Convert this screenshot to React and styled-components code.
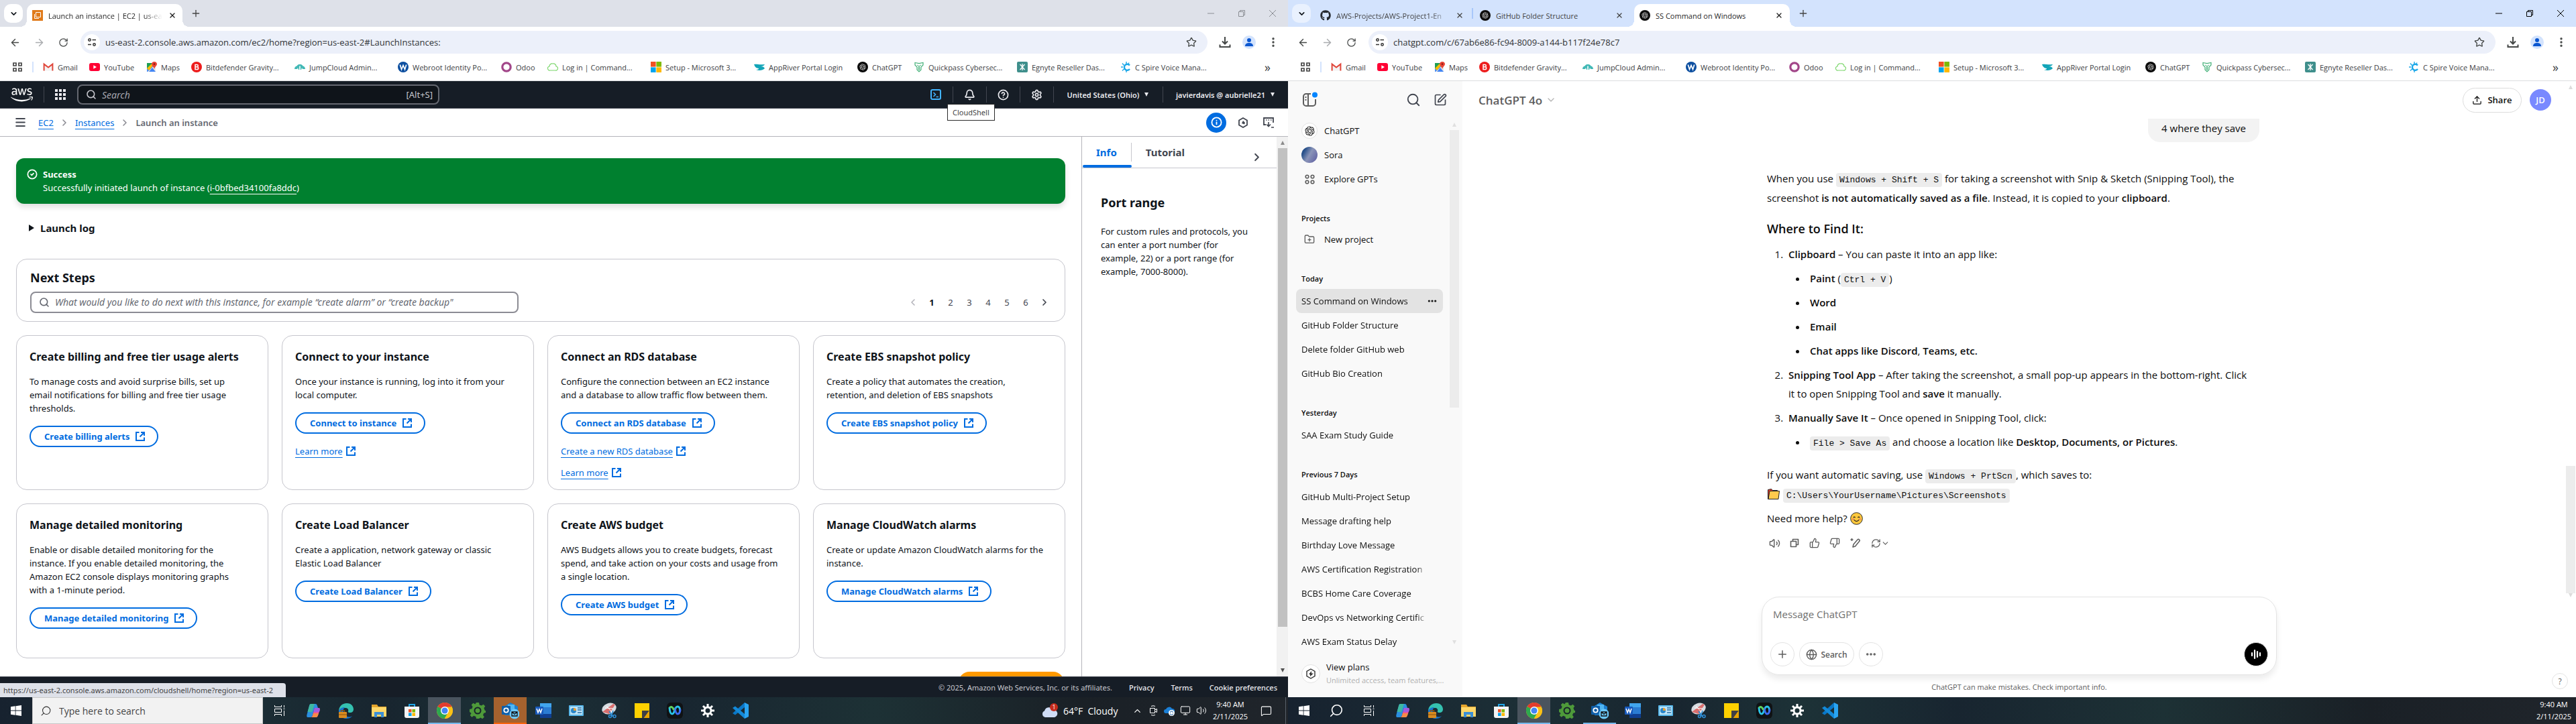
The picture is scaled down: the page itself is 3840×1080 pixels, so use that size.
import React from "react";
import styled, { createGlobalStyle, css } from "styled-components";
import {
  ArrowLeft, ArrowRight, RotateCw, Star, Search, X, Plus, ChevronDown, ChevronUp, ChevronLeft, ChevronRight,
  Bell, CircleHelp, Settings, CircleCheck, Info, Menu, ThumbsUp, ThumbsDown, Volume2, RefreshCw, Globe,
  SquarePen, Upload, FolderPlus, Monitor, MessageSquare, Ellipsis, EllipsisVertical,
} from "lucide-react";
import { FaAws, FaGithub } from "react-icons/fa";
import { RiOpenaiFill } from "react-icons/ri";

const ui = `"Open Sans", "Noto Sans", sans-serif`;
const ember = `"Noto Sans", "Open Sans", sans-serif`;
const ink = "#0f141a";
const blue = "#006ce0";
const line = "#c6c6cd";

const Global = createGlobalStyle`
  *, *::before, *::after { box-sizing: border-box; }
  body { margin: 0; background: #fff; font-family: ${ui}; color: ${ink}; }
  button, input, textarea { font: inherit; color: inherit; margin: 0; }
  svg { display: block; flex: none; }
`;

const bare = css`
  border: 0;
  padding: 0;
  background: none;
  display: flex;
  align-items: center;
  justify-content: center;
`;

const Desktop = styled.div`
  display: flex;
  height: 100vh;
`;
const Screen = styled.div`
  flex: 1;
  min-width: 0;
  display: flex;
  flex-direction: column;
`;

/* ---------- browser frame ---------- */

const TabStrip = styled.div`
  display: flex;
  align-items: flex-start;
  gap: 6px;
  height: 40px;
  padding: 6px 0 0 6px;
  background: ${(p) => (p.$active ? "#d3e3fd" : "#dee1e9")};
`;
const TabMenu = styled.button`
  ${bare};
  width: 28px;
  height: 28px;
  border-radius: 10px;
  background: ${(p) => (p.$active ? "#e9f1fe" : "#fff")};
`;
const Tab = styled.div`
  position: relative;
  display: flex;
  align-items: center;
  gap: 8px;
  width: 232px;
  height: 34px;
  padding: 0 8px;
  font-size: 11px;
  color: ${(p) => (p.$current ? "#1f1f1f" : "#444")};
  background: ${(p) => (p.$current ? "#fff" : "transparent")};
  border-radius: 10px 10px 0 0;
  ${(p) =>
    p.$current &&
    css`
      &::before,
      &::after {
        content: "";
        position: absolute;
        bottom: 0;
        width: 10px;
        height: 10px;
      }
      &::before {
        left: -10px;
        background: radial-gradient(circle at 0 0, transparent 10px, #fff 10px);
      }
      &::after {
        right: -10px;
        background: radial-gradient(circle at 100% 0, transparent 10px, #fff 10px);
      }
    `}
  ${(p) =>
    p.$divided &&
    css`
      &::after {
        content: "";
        position: absolute;
        right: -4px;
        top: 6px;
        width: 2px;
        height: 16px;
        background: #a8c7fa;
      }
    `}
`;
const TabTitle = styled.span`
  flex: 1;
  white-space: nowrap;
  ${(p) => p.$fade && "mask-image: linear-gradient(90deg, #000 84%, transparent);"}
`;
const TabButton = styled.button`
  ${bare};
  width: ${(p) => p.$size || 16}px;
  height: ${(p) => p.$size || 16}px;
`;
const Controls = styled.div`
  margin: -6px 0 0 auto;
  display: flex;
  color: ${(p) => (p.$active ? "#000" : "#8b8e94")};
`;
const Control = styled.button`
  ${bare};
  width: 46px;
  height: 40px;
`;
const Toolbar = styled.div`
  display: flex;
  align-items: center;
  padding: 6px 4px;
  color: #444746;
`;
const ToolButton = styled.button`
  ${bare};
  width: 36px;
  height: 34px;
  ${(p) => p.$dim && "color: #a9abae;"}
`;
const Omnibox = styled.label`
  flex: 1;
  display: flex;
  align-items: center;
  gap: 8px;
  height: 34px;
  margin: 0 8px;
  padding: 0 16px 0 5px;
  border-radius: 17px;
  background: #ecf0fa;
`;
const SiteInfo = styled.span`
  display: grid;
  place-items: center;
  width: 24px;
  height: 24px;
  border-radius: 12px;
  background: #fff;
`;
const Address = styled.input`
  flex: 1;
  border: 0;
  padding: 0;
  background: none;
  font-size: 13px;
  color: #303336;
`;
const Avatar = styled.span`
  display: grid;
  place-items: center;
  width: 20px;
  height: 20px;
  border-radius: 10px;
  background: #d3e3fd;
`;
const Bookmarks = styled.nav`
  display: flex;
  align-items: center;
  height: 35px;
  padding: 0 26px 6px 18px;
  border-bottom: 1px solid #dcdde0;
  font-size: 11px;
  color: #3c4043;
`;
const BookmarkDivider = styled.span`
  width: 2px;
  height: 16px;
  margin: 0 14px 0 14px;
  background: #d3e3fd;
`;
const Bookmark = styled.a`
  display: flex;
  align-items: center;
  gap: 6px;
  width: ${(p) => p.$w}px;
  color: inherit;
  text-decoration: none;
  white-space: nowrap;
`;
const Overflow = styled.button`
  ${bare};
  margin-left: auto;
  font-size: 18px;
  height: 16px;
`;

const S = ({ w = 16, h, vb = 16, children }) => (
  <svg width={w} height={h || w} viewBox={`0 0 ${vb} ${vb}`} fill="none">{children}</svg>
);

const GptDisc = () => (
  <S><circle cx="8" cy="8" r="8" fill="#0b0b0b" /><g transform="translate(2.500 2.500)"><RiOpenaiFill size={11} color="#e8e8e8" /></g></S>
);

const marks = [
  ["Gmail", 69, <S><path d="M1 13.5V4l7 5.5L15 4v9.5" fill="#f3f3f3" /><path d="M1.6 13.5V3.6L8 8.6l6.4-5v9.9" stroke="#e0463a" strokeWidth="2" /></S>],
  ["YouTube", 85, <S><rect y="2" width="16" height="12" rx="3" fill="#f03" /><path d="M6.3 5.2v5.6L11 8z" fill="#fff" /></S>],
  ["Maps", 67, <S><path d="M1 2h13v13H1z" fill="#4a8df5" /><path d="M1 2h9L1 11z" fill="#1e9e55" /><path d="M2 15L14 4v11z" fill="#e8e8e8" /><path d="M4 15l5-6 5 6z" fill="#4285f4" /><path d="M1 10l3 3 6-7-2-3z" fill="#fbbc05" /><path d="M12 0c2.500 0 4 1.600 4 3.600C16 6 13 7.500 12 11 11 7.500 8 6 8 3.600 8 1.600 9.500 0 12 0z" fill="#ea4335" /><circle cx="12" cy="3.600" r="1.300" fill="#8a1c12" /></S>],
  ["Bitdefender Gravity...", 154, <S><circle cx="8" cy="8" r="8" fill="#ed1c1c" /><path d="M6 4.500h2.600a1.600 1.600 0 010 3.300H6.500h2.300a1.800 1.800 0 010 3.700H6z" stroke="#fff" strokeWidth="1.500" /></S>],
  ["JumpCloud Admin...", 154, <S><path d="M0 11c0-3 2-4.500 3.500-4.500C4.500 4.500 6 4 8 4s3.500.5 4.500 2.500C14 6.500 16 8 16 11h-4l-1-2-1 3H6L5 9l-1 2z" fill="#41b8b5" /><path d="M7.200 6.500h1.600V13H7.200z" fill="#fff" /></S>],
  ["Webroot Identity Po...", 154, <S><circle cx="8" cy="8" r="8" fill="#0d4fa0" /><path d="M3.300 4.500l2.200 7L8 5.500l2.500 6 2.200-7" stroke="#fff" strokeWidth="1.700" /></S>],
  ["Odoo", 69, <S><circle cx="8" cy="8" r="6.200" stroke="#a24689" strokeWidth="3.200" /></S>],
  ["Log in | Command...", 154, <S><path d="M4 13a3 3 0 01-1-6 4 4 0 015-4 4 4 0 015 4 3 3 0 01-1 6z" stroke="#7bd66b" strokeWidth="1.200" /></S>],
  ["Setup - Microsoft 3...", 154, <S><path d="M0 0h7.600v7.600H0z" fill="#f25022" /><path d="M8.400 0H16v7.600H8.400z" fill="#7fba00" /><path d="M0 8.400h7.600V16H0z" fill="#00a4ef" /><path d="M8.400 8.400H16V16H8.400z" fill="#ffb900" /></S>],
  ["AppRiver Portal Login", 154, <S><path d="M0 4c4-1 7 1 16 0-1 2-3 3-6 3 3 0 5 1 6 3-3 3-8 4-13 2 3 0 4-1 4-2C3 10 1 7 0 4z" fill="#12a5b8" /></S>],
  ["ChatGPT", 84, <GptDisc />],
  ["Quickpass Cybersec...", 154, <S><path d="M2 1.500l6 1.200 6-1.200V5L11 8v4l-3 3-3-3V8L2 5z" stroke="#43b078" strokeWidth="1.200" /><path d="M5 5l3 2 3-2M8 7v6M6.500 9h3M6.500 11h3" stroke="#43b078" /></S>],
  ["Egnyte Reseller Das...", 154, <S><rect width="16" height="16" rx="2" fill="#3f8f8c" /><path d="M8 3v10M4.500 4L8 8l3.500-4M4.500 12L8 8l3.500 4" stroke="#fff" strokeWidth="1.300" /></S>],
  ["C Spire Voice Mana...", 140, <S><path d="M14 5.500A4.500 4.500 0 1014 11" stroke="#1ba7e8" strokeWidth="2.400" /><path d="M1 8h3M3 2.500l2.500 3M9 0v4M3 13.500l2.500-2.500M9 16v-4M13 1.500L11.500 4" stroke="#1ba7e8" strokeWidth="1.400" /></S>],
];

const fav = {
  ec2: <S><rect width="16" height="16" fill="#e07a1a" /><path d="M5.500 3.500h7v7h-7zM3.500 6v6.500H10" stroke="#fff" /></S>,
  git: <FaGithub size={16} color="#24292f" />,
  gpt: <GptDisc />,
};

function Browser({ active, tabs, url, children }) {
  return (
    <>
      <TabStrip $active={active}>
        <TabMenu $active={active} aria-label="Search tabs"><ChevronDown size={13} strokeWidth={3} /></TabMenu>
        {tabs.map((t) => (
          <Tab key={t.title} $current={t.current} $divided={t.divided}>
            {fav[t.icon]}
            <TabTitle $fade={t.fade}>{t.title}</TabTitle>
            <TabButton aria-label="Close tab"><X size={12} strokeWidth={2.600} /></TabButton>
          </Tab>
        ))}
        <TabButton $size={28} aria-label="New tab"><Plus size={16} color="#444" strokeWidth={2} /></TabButton>
        <Controls $active={active}>
          <Control aria-label="Minimize"><S w={10} vb={10}><path d="M0 5h10" stroke="currentColor" /></S></Control>
          <Control aria-label="Restore"><S w={10} vb={10}><path d="M.5 2.500h7v7h-7zM2.500 2.500v-2h7v7h-2" stroke="currentColor" /></S></Control>
          <Control aria-label="Close"><S w={10} vb={10}><path d="M0 0l10 10M10 0L0 10" stroke="currentColor" /></S></Control>
        </Controls>
      </TabStrip>
      <Toolbar>
        <ToolButton aria-label="Back"><ArrowLeft size={17} /></ToolButton>
        <ToolButton aria-label="Forward" $dim><ArrowRight size={17} /></ToolButton>
        <ToolButton aria-label="Reload"><RotateCw size={15} /></ToolButton>
        <Omnibox>
          <SiteInfo>
            <S w={14} vb={14}><circle cx="3.500" cy="3.500" r="1.700" stroke="#333" strokeWidth="1.500" /><path d="M7.500 3.500H13M1 10.500h5" stroke="#333" strokeWidth="1.500" /><circle cx="10.500" cy="10.500" r="1.700" stroke="#333" strokeWidth="1.500" /></S>
          </SiteInfo>
          <Address aria-label="Address" defaultValue={url} />
          <Star size={16} />
        </Omnibox>
        <ToolButton aria-label="Downloads">
          <S w={18} vb={18}><path d="M9 1v10M5 7.500l4 4 4-4M1.500 12.500V16h15v-3.500" stroke="currentColor" strokeWidth="2" /></S>
        </ToolButton>
        <ToolButton aria-label="Profile"><Avatar><S w={12} vb={12}><circle cx="6" cy="3" r="3" fill="#0b57d0" /><path d="M0 12c0-4 3-5 6-5s6 1 6 5z" fill="#0b57d0" /></S></Avatar></ToolButton>
        <ToolButton aria-label="Menu"><EllipsisVertical size={18} strokeWidth={2.500} /></ToolButton>
      </Toolbar>
      <Bookmarks aria-label="Bookmarks">
        <S><path d="M2 2h4v4H2zM10 2h4v4h-4zM2 10h4v4H2zM10 10h4v4h-4z" stroke="#444" strokeWidth="1.700" /></S>
        <BookmarkDivider />
        {marks.map(([name, w, icon]) => (
          <Bookmark key={name} $w={w} href="#">{icon}{name}</Bookmark>
        ))}
        <Overflow aria-label="More bookmarks">»</Overflow>
      </Bookmarks>
      {children}
    </>
  );
}

/* ---------- AWS console ---------- */

const Console = styled.div`
  flex: 1;
  min-height: 0;
  display: flex;
  flex-direction: column;
  font-family: ${ember};
`;
const AwsHeader = styled.header`
  display: flex;
  align-items: center;
  height: 41px;
  padding-left: 16px;
  background: #161d26;
  border-bottom: 1px solid #424650;
  color: #ebebf0;
`;
const HeaderRule = styled.span`
  width: 1px;
  height: 24px;
  margin: 0 16px;
  background: #424650;
`;
const HeaderSearch = styled.label`
  display: flex;
  align-items: center;
  gap: 8px;
  width: 540px;
  height: 30px;
  margin-left: 17px;
  padding: 0 8px 0 11px;
  border: 2px solid #656871;
  border-radius: 8px;
  background: #0f141a;
  color: #c6c6cd;
  font-size: 13px;
`;
const PlainInput = styled.input`
  flex: 1;
  min-width: 0;
  border: 0;
  padding: 0;
  background: none;
  font-size: 14px;
  &::placeholder {
    color: ${(p) => p.$hint};
    opacity: 1;
    font-style: ${(p) => (p.$plain ? "normal" : "italic")};
  }
`;
const HeaderTools = styled.div`
  display: flex;
  margin-left: auto;
`;
const HeaderTool = styled.button`
  ${bare};
  gap: 7px;
  width: ${(p) => p.$w || 50}px;
  height: 24px;
  font-size: 11px;
  font-weight: 600;
  border-left: ${(p) => (p.$first ? 0 : 1)}px solid #424650;
`;
const Tooltip = styled.div`
  position: absolute;
  top: -7px;
  left: 1412px;
  padding: 4px 7px;
  border: 1px solid #2b2b2b;
  background: #fff;
  color: #444;
  font-size: 11px;
  line-height: 15px;
`;
const CrumbBar = styled.div`
  position: relative;
  display: flex;
  align-items: center;
  gap: 8px;
  height: 42px;
  padding: 0 16px 0 20px;
  border-bottom: 1px solid #b4b4bb;
  font-size: 13px;
`;
const IconButton = styled.button`
  ${bare};
  width: ${(p) => p.$size || 20}px;
  height: ${(p) => p.$size || 20}px;
  border-radius: 50%;
  color: ${(p) => (p.$on ? "#fff" : "#424650")};
  background: ${(p) => (p.$on ? blue : "none")};
`;
const Crumbs = styled.nav`
  display: flex;
  align-items: center;
  gap: 8px;
  margin-left: 9px;
  color: #656871;
  font-weight: 600;
`;
const Link = styled.a`
  display: inline-flex;
  align-items: center;
  gap: 4px;
  color: ${(p) => (p.$light ? "#fff" : blue)};
  font-weight: 400;
  text-decoration: underline;
  text-underline-offset: 4px;
`;
const CrumbTools = styled.div`
  display: flex;
  align-items: center;
  gap: 12px;
  margin-left: auto;
`;
const AwsBody = styled.div`
  flex: 1;
  min-height: 0;
  display: flex;
  overflow: hidden;
`;
const Content = styled.main`
  flex: 1;
  min-width: 0;
  padding: 32px 24px 0;
  font-size: 13px;
  line-height: 20px;
  overflow: hidden;
`;
const Flash = styled.div`
  display: flex;
  gap: 8px;
  height: 68px;
  padding: 14px 16px;
  border-radius: 12px;
  background: #00802f;
  color: #fff;
  box-shadow: 0 5px 8px rgba(0, 0, 0, 0.12);
  p {
    margin: 0;
  }
  svg {
    margin-top: 2px;
  }
`;
const Disclosure = styled.button`
  ${bare};
  gap: 9px;
  margin: 24px 0 34px 19px;
  font-size: 15px;
  font-weight: 700;
  line-height: 24px;
`;
const Steps = styled.section`
  height: 94px;
  padding: 15px 16px 12px 20px;
  margin-bottom: 20px;
  border: 1px solid ${line};
  border-radius: 16px;
  h2 {
    margin: 0 0 8px;
    font-size: 18px;
    line-height: 25px;
  }
`;
const StepsRow = styled.div`
  display: flex;
  align-items: center;
  justify-content: space-between;
`;
const Filter = styled.label`
  display: flex;
  align-items: center;
  gap: 8px;
  width: 728px;
  height: 32px;
  padding: 0 11px;
  border: 2px solid #8c8c94;
  border-radius: 8px;
  color: #656871;
`;
const Pages = styled.div`
  display: flex;
`;
const Page = styled.button`
  ${bare};
  width: 28px;
  height: 28px;
  font-size: 13px;
  font-weight: ${(p) => (p.$on ? 700 : 400)};
  color: ${(p) => (p.$on ? ink : p.$dim ? "#b4b4bb" : "#424650")};
`;
const Cards = styled.div`
  display: grid;
  grid-template-columns: repeat(4, 1fr);
  gap: 20px;
`;
const Card = styled.article`
  height: 231px;
  padding: 20px 19px;
  border: 1px solid ${line};
  border-radius: 16px;
  white-space: nowrap;
  h3 {
    margin: 0 0 16px;
    font-size: 16px;
    line-height: 22px;
  }
  p {
    margin: 0 0 16px;
    white-space: pre-line;
  }
`;
const CardLinks = styled.div`
  display: flex;
  flex-direction: column;
  align-items: flex-start;
  gap: 12px;
  margin-top: 16px;
`;
const Action = styled.button`
  ${bare};
  gap: 8px;
  height: 32px;
  padding: 0 17px 0 20px;
  border: 2px solid ${blue};
  border-radius: 16px;
  color: ${blue};
  font-size: 13px;
  font-weight: 700;
`;
const Primary = styled.button`
  display: block;
  width: 157px;
  height: 32px;
  margin: 20px 2px 0 auto;
  border: 0;
  border-radius: 16px;
  background: #ff9900;
`;
const HelpPanel = styled.aside`
  width: 291px;
  border-left: 1px solid #b4b4bb;
`;
const HelpTabs = styled.div`
  display: flex;
  align-items: center;
  height: 47px;
  padding-right: 20px;
  border-bottom: 1px solid ${line};
`;
const HelpTab = styled.button`
  ${bare};
  position: relative;
  height: 28px;
  padding: 0 21px;
  font-size: 15px;
  font-weight: 700;
  color: ${(p) => (p.$on ? blue : "#424650")};
  ${(p) =>
    p.$on &&
    css`
      border-right: 1px solid ${line};
      &::after {
        content: "";
        position: absolute;
        left: 1px;
        right: -1px;
        bottom: -9px;
        height: 4px;
        border-radius: 2px;
        background: ${blue};
      }
    `}
`;
const HelpText = styled.div`
  padding: 38px 28px;
  font-size: 13px;
  line-height: 20px;
  white-space: nowrap;
  h2 {
    margin: 0 0 20px;
    font-size: 18px;
    line-height: 26px;
  }
  p {
    margin: 0;
    white-space: pre-line;
  }
`;
const HelpClose = styled(IconButton)`
  align-self: flex-end;
  height: 32px;
`;
const ScrollRail = styled.div`
  display: flex;
  flex-direction: column;
  align-items: center;
  width: 17px;
  padding: 6px 0;
  background: #f1f1f1;
`;
const ScrollThumb = styled.div`
  flex: ${(p) => p.$grow};
  width: 14px;
  margin: 5px 0 0;
  background: ${(p) => (p.$soft ? "#ececec" : "#c1c1c1")};
`;
const Grow = styled.div`
  flex: ${(p) => p.$grow};
`;
const AwsFooter = styled.footer`
  position: relative;
  display: flex;
  align-items: center;
  justify-content: flex-end;
  gap: 25px;
  height: 31px;
  padding-right: 16px;
  background: #161d26;
  border-top: 1px solid #424650;
  color: #c6c6cd;
  font-size: 11px;
  a {
    color: #ebebf0;
    font-weight: 500;
    text-decoration: none;
  }
`;
const StatusBubble = styled.div`
  position: absolute;
  left: 0;
  bottom: 0;
  width: 426px;
  padding: 2px 5px;
  border-top-right-radius: 4px;
  background: #dee1e9;
  color: #444;
  font-size: 11px;
  line-height: 17px;
  white-space: nowrap;
`;

const Up = ({ color }) => <S w={8} h={6} vb={8}><path d="M0 8L4 0l4 8z" fill={color} /></S>;
const Down = ({ color }) => <S w={8} h={6} vb={8}><path d="M0 0l4 8 4-8z" fill={color} /></S>;
const External = () => (
  <S><path d="M6.500 2H2v12h12V9.500M9 2h5v5M14 2L7.500 8.500" stroke="currentColor" strokeWidth="2" /></S>
);

const cards = [
  ["Create billing and free tier usage alerts", "To manage costs and avoid surprise bills, set up\nemail notifications for billing and free tier usage\nthresholds.", "Create billing alerts"],
  ["Connect to your instance", "Once your instance is running, log into it from your\nlocal computer.", "Connect to instance", ["Learn more"]],
  ["Connect an RDS database", "Configure the connection between an EC2 instance\nand a database to allow traffic flow between them.", "Connect an RDS database", ["Create a new RDS database", "Learn more"]],
  ["Create EBS snapshot policy", "Create a policy that automates the creation,\nretention, and deletion of EBS snapshots", "Create EBS snapshot policy"],
  ["Manage detailed monitoring", "Enable or disable detailed monitoring for the\ninstance. If you enable detailed monitoring, the\nAmazon EC2 console displays monitoring graphs\nwith a 1-minute period.", "Manage detailed monitoring"],
  ["Create Load Balancer", "Create a application, network gateway or classic\nElastic Load Balancer", "Create Load Balancer"],
  ["Create AWS budget", "AWS Budgets allows you to create budgets, forecast\nspend, and take action on your costs and usage from\na single location.", "Create AWS budget"],
  ["Manage CloudWatch alarms", "Create or update Amazon CloudWatch alarms for the\ninstance.", "Manage CloudWatch alarms"],
];

function Aws() {
  return (
    <Console>
      <AwsHeader>
        <FaAws size={33} color="#fff" />
        <HeaderRule />
        <S><path d="M0 0h4v4H0zM6 0h4v4H6zM12 0h4v4h-4zM0 6h4v4H0zM6 6h4v4H6zM12 6h4v4h-4zM0 12h4v4H0zM6 12h4v4H6zM12 12h4v4h-4z" fill="#ebebf0" /></S>
        <HeaderSearch>
          <Search size={16} strokeWidth={2.400} />
          <PlainInput aria-label="Search services" placeholder="Search" $hint="#a4a4ad" />
          [Alt+S]
        </HeaderSearch>
        <HeaderTools>
          <HeaderTool $first aria-label="CloudShell">
            <S><rect x="1" y="1" width="14" height="14" rx="2" stroke="#42b4ff" strokeWidth="2" /><path d="M4.500 5l3 3-3 3M8.500 11.500H12" stroke="#42b4ff" strokeWidth="1.600" /></S>
          </HeaderTool>
          <HeaderTool aria-label="Notifications"><Bell size={17} strokeWidth={2.400} /></HeaderTool>
          <HeaderTool aria-label="Help"><CircleHelp size={17} strokeWidth={2.400} /></HeaderTool>
          <HeaderTool aria-label="Settings"><Settings size={17} strokeWidth={2.400} /></HeaderTool>
          <HeaderTool $w={163}>United States (Ohio) <Down color="#ebebf0" /></HeaderTool>
          <HeaderTool $w={187}>javierdavis @ aubrielle21 <Down color="#ebebf0" /></HeaderTool>
        </HeaderTools>
      </AwsHeader>
      <CrumbBar>
        <IconButton aria-label="Open navigation"><Menu size={19} strokeWidth={2.400} /></IconButton>
        <Crumbs aria-label="Breadcrumb">
          <Link href="#">EC2</Link>
          <ChevronRight size={16} strokeWidth={2.400} color="#8c8c94" />
          <Link href="#">Instances</Link>
          <ChevronRight size={16} strokeWidth={2.400} color="#8c8c94" />
          <span>Launch an instance</span>
        </Crumbs>
        <CrumbTools>
          <IconButton $size={30} $on aria-label="Info"><Info size={17} strokeWidth={2.600} /></IconButton>
          <IconButton $size={26} aria-label="Amazon Q"><S><path d="M8 1l6 3.500v7L8 15l-6-3.500v-7z" stroke="currentColor" strokeWidth="1.800" /><path d="M8 5l3 3-1 2.500L6 9z" fill="currentColor" /></S></IconButton>
          <IconButton $size={26} aria-label="Tutorials"><S><path d="M4 11H1V1h14v7" stroke="currentColor" strokeWidth="1.800" /><path d="M4 4h1.500M7.500 4H9M11 4h1.500M8 7v6M5 10.500l3 3 3-3M12 15h4" stroke="currentColor" strokeWidth="1.600" /></S></IconButton>
        </CrumbTools>
        <Tooltip role="tooltip">CloudShell</Tooltip>
      </CrumbBar>
      <AwsBody>
        <Content>
          <Flash role="status">
            <CircleCheck size={16} strokeWidth={2.600} />
            <div>
              <p><b>Success</b></p>
              <p>Successfully initiated launch of instance (<Link $light href="#">i-0bfbed34100fa8ddc</Link>)</p>
            </div>
          </Flash>
          <Disclosure><S w={8} h={10} vb={8}><path d="M0-1l8 5-8 5z" fill={ink} /></S>Launch log</Disclosure>
          <Steps>
            <h2>Next Steps</h2>
            <StepsRow>
              <Filter>
                <Search size={16} strokeWidth={2.400} />
                <PlainInput aria-label="Find next steps" $hint="#656871" placeholder="What would you like to do next with this instance, for example “create alarm” or “create backup&quot;" />
              </Filter>
              <Pages>
                <Page $dim aria-label="Previous page"><ChevronLeft size={16} strokeWidth={2.400} /></Page>
                {[1, 2, 3, 4, 5, 6].map((n) => <Page key={n} $on={n === 1}>{n}</Page>)}
                <Page aria-label="Next page"><ChevronRight size={16} strokeWidth={2.600} /></Page>
              </Pages>
            </StepsRow>
          </Steps>
          <Cards>
            {cards.map(([title, text, action, links]) => (
              <Card key={title}>
                <h3>{title}</h3>
                <p>{text}</p>
                <Action>{action}<External /></Action>
                {links && (
                  <CardLinks>{links.map((l) => <Link key={l} href="#">{l}<External /></Link>)}</CardLinks>
                )}
              </Card>
            ))}
          </Cards>
          <Primary aria-label="View all instances" />
        </Content>
        <HelpPanel>
          <HelpTabs>
            <HelpTab $on>Info</HelpTab>
            <HelpTab>Tutorial</HelpTab>
            <Grow $grow={1} />
            <HelpClose aria-label="Close panel"><ChevronRight size={19} strokeWidth={2.400} /></HelpClose>
          </HelpTabs>
          <HelpText>
            <h2>Port range</h2>
            <p>{"For custom rules and protocols, you\ncan enter a port number (for\nexample, 22) or a port range (for\nexample, 7000-8000)."}</p>
          </HelpText>
        </HelpPanel>
        <ScrollRail>
          <Up color="#8b8b8b" />
          <ScrollThumb $grow={713} />
          <Grow $grow={62} />
          <Down color="#505050" />
        </ScrollRail>
      </AwsBody>
      <AwsFooter>
        <span>© 2025, Amazon Web Services, Inc. or its affiliates.</span>
        <a href="#">Privacy</a>
        <a href="#">Terms</a>
        <a href="#">Cookie preferences</a>
        <StatusBubble>https://us-east-2.console.aws.amazon.com/cloudshell/home?region=us-east-2</StatusBubble>
      </AwsFooter>
    </Console>
  );
}

/* ---------- ChatGPT ---------- */

const Chat = styled.div`
  flex: 1;
  min-height: 0;
  display: flex;
  color: #0d0d0d;
`;
const Side = styled.aside`
  display: flex;
  flex-direction: column;
  width: 260px;
  background: #f9f9f9;
  font-size: 13px;
`;
const SideTop = styled.div`
  display: flex;
  align-items: center;
  gap: 18px;
  height: 56px;
  padding: 0 22px 0 20px;
  color: #5d5d5d;
`;
const SideBody = styled.div`
  flex: 1;
  min-height: 0;
  display: flex;
  overflow: hidden;
`;
const SideList = styled.nav`
  width: 231px;
  padding-left: 12px;
  margin-right: 10px;
`;
const SideRail = styled.div`
  display: flex;
  flex-direction: column;
  align-items: center;
  width: 14px;
  padding: 6px 0 14px;
`;
const SideItem = styled.a`
  display: flex;
  align-items: center;
  gap: 10px;
  height: 36px;
  padding: 0 8px;
  border-radius: 8px;
  background: ${(p) => (p.$on ? "#e3e3e3" : "none")};
  color: inherit;
  text-decoration: none;
  white-space: nowrap;
`;
const Fade = styled.span`
  width: 187px;
  mask-image: linear-gradient(90deg, #000 92%, transparent);
`;
const SideHead = styled.h4`
  margin: 0;
  height: ${(p) => (p.$tight ? 54 : 56)}px;
  padding: 33px 8px 0;
  font-size: 11px;
  line-height: 16px;
  font-weight: 600;
`;
const Disc = styled.span`
  display: grid;
  place-items: center;
  width: ${(p) => p.$size}px;
  height: ${(p) => p.$size}px;
  border-radius: 50%;
  border: ${(p) => (p.$bare ? 0 : 1)}px solid #e3e3e3;
  background: ${(p) => p.$bg || "#fff"};
`;
const Plans = styled.button`
  ${bare};
  justify-content: flex-start;
  gap: 9px;
  height: 65px;
  padding: 0 20px 6px;
  text-align: left;
  line-height: 19px;
  small {
    display: block;
    color: #b0b0b0;
    font-size: 11px;
  }
`;
const Thread = styled.main`
  position: relative;
  flex: 1;
  min-width: 0;
  display: flex;
  flex-direction: column;
  background: #fff;
`;
const ThreadTop = styled.div`
  display: flex;
  align-items: center;
  gap: 12px;
  height: 56px;
  padding: 0 37px 0 24px;
`;
const Model = styled.button`
  ${bare};
  gap: 5px;
  margin-right: auto;
  font-size: 17px;
  font-weight: 600;
  color: #5d5d5d;
`;
const Share = styled.button`
  ${bare};
  gap: 8px;
  width: 88px;
  height: 37px;
  border: 1px solid #dcdcdc;
  border-radius: 19px;
  font-size: 13px;
  font-weight: 600;
`;
const Initials = styled.button`
  ${bare};
  width: 32px;
  height: 32px;
  border-radius: 16px;
  background: #7989ff;
  color: #fff;
  font-size: 13px;
  font-weight: 600;
`;
const Messages = styled.div`
  flex: 1;
  min-height: 0;
  width: 768px;
  max-width: 100%;
  margin: 0 auto;
  padding: 0 8px;
  overflow: hidden;
  font-size: 15px;
  line-height: 28px;
  white-space: nowrap;
  p {
    margin: 0 0 7px;
    line-height: 29px;
  }
  h3 {
    margin: 17px 0 10px;
    font-size: 18px;
    line-height: 28px;
    font-weight: 600;
  }
  ol {
    margin: 0 0 21px;
    padding-left: 28px;
  }
  ul {
    margin: 8px 0 0;
    padding-left: 28px;
    list-style: disc;
  }
  li {
    margin-bottom: 8px;
    padding-left: 4px;
  }
  b {
    font-weight: 600;
  }
  code {
    padding: 3px 5px;
    border-radius: 4px;
    background: #ececec;
    font-family: "Liberation Mono", monospace;
    font-size: 13px;
    line-height: 16px;
  }
  p svg {
    display: inline-block;
    vertical-align: -4px;
  }
`;
const Bubble = styled.div`
  width: fit-content;
  height: 35px;
  margin: 0 18px 40px auto;
  padding: 0 20px;
  border-radius: 0 0 18px 18px;
  background: #f3f3f3;
`;
const Tools = styled.div`
  display: flex;
  align-items: center;
  height: 30px;
  margin: 4px 0 0 -4px;
  color: #5d5d5d;
`;
const Tool = styled.button`
  ${bare};
  width: ${(p) => p.$w || 30}px;
  height: 30px;
`;
const Composer = styled.form`
  display: flex;
  flex-direction: column;
  justify-content: space-between;
  width: 768px;
  height: 117px;
  margin: 0 auto;
  padding: 12px;
  border: 1px solid #e3e3e3;
  border-radius: 26px;
  box-shadow: 0 6px 10px rgba(0, 0, 0, 0.08);
`;
const Prompt = styled.textarea`
  height: 28px;
  border: 0;
  padding: 0 4px;
  resize: none;
  background: none;
  font-size: 15px;
  line-height: 26px;
  &::placeholder {
    color: #6f6f6f;
    opacity: 1;
  }
`;
const ComposerRow = styled.div`
  display: flex;
  gap: 7px;
  color: #5d5d5d;
`;
const Pill = styled.button`
  ${bare};
  gap: 5px;
  width: ${(p) => p.$w || 36}px;
  height: 36px;
  border: 1px solid #e3e3e3;
  border-radius: 18px;
  font-size: 12px;
  font-weight: 600;
  ${(p) => p.$dark && "margin-left: auto; background: #000; color: #fff;"}
`;
const Note = styled.div`
  height: 33px;
  padding-top: 9px;
  text-align: center;
  font-size: 11px;
  line-height: 17px;
  color: #5d5d5d;
`;
const HelpDot = styled.button`
  ${bare};
  position: absolute;
  right: 12px;
  bottom: 12px;
  width: 24px;
  height: 24px;
  border: 1px solid #e3e3e3;
  border-radius: 12px;
  font-size: 12px;
  color: #5d5d5d;
`;
const ThreadRail = styled.div`
  position: absolute;
  top: 6px;
  right: 1px;
  bottom: 149px;
  width: 14px;
  display: flex;
  flex-direction: column;
  align-items: center;
`;

const Dot3 = ({ size = 16 }) => <Ellipsis size={size} strokeWidth={2.800} />;
const Recent = ({ names }) => names.map((n) => <SideItem key={n} href="#"><Fade>{n}</Fade></SideItem>);

function ChatGpt() {
  return (
    <Chat>
      <Side>
        <SideTop>
          <IconButton $size={24} aria-label="Toggle sidebar">
            <S w={24} vb={24}><path d="M14 3H7a4 4 0 00-4 4v10a4 4 0 004 4h10a4 4 0 004-4v-6M10 3v18M5.500 8h2M5.500 12h2" stroke="#5d5d5d" strokeWidth="2" /><circle cx="20" cy="4.500" r="4" fill="#0285ff" /></S>
          </IconButton>
          <Grow $grow={1} />
          <IconButton $size={22} aria-label="Search chats"><Search size={22} /></IconButton>
          <IconButton $size={22} aria-label="New chat"><SquarePen size={20} /></IconButton>
        </SideTop>
        <SideBody>
          <SideList>
            <SideItem href="#"><Disc $size={24}><RiOpenaiFill size={17} /></Disc>ChatGPT</SideItem>
            <SideItem href="#"><Disc $size={24} $bare $bg="linear-gradient(120deg, #27508a 20%, #8a94b8 50%, #5a5aa0)" />Sora</SideItem>
            <SideItem href="#"><Disc $size={24} $bare $bg="none"><S w={15} vb={15}><circle cx="3.500" cy="3.500" r="2.300" stroke="#5d5d5d" strokeWidth="1.600" /><circle cx="11.500" cy="3.500" r="2.300" stroke="#5d5d5d" strokeWidth="1.600" /><circle cx="3.500" cy="11.500" r="2.300" stroke="#5d5d5d" strokeWidth="1.600" /><circle cx="11.500" cy="11.500" r="2.300" stroke="#5d5d5d" strokeWidth="1.600" /></S></Disc>Explore GPTs</SideItem>
            <SideHead $tight>Projects</SideHead>
            <SideItem href="#"><Disc $size={24} $bare $bg="none"><FolderPlus size={16} color="#5d5d5d" /></Disc>New project</SideItem>
            <SideHead>Today</SideHead>
            <SideItem href="#" $on><Fade>SS Command on Windows</Fade><Dot3 /></SideItem>
            <Recent names={["GitHub Folder Structure", "Delete folder GitHub web", "GitHub Bio Creation"]} />
            <SideHead>Yesterday</SideHead>
            <Recent names={["SAA Exam Study Guide"]} />
            <SideHead>Previous 7 Days</SideHead>
            <Recent names={["GitHub Multi-Project Setup", "Message drafting help", "Birthday Love Message", "AWS Certification Registration", "BCBS Home Care Coverage", "DevOps vs Networking Certific", "AWS Exam Status Delay"]} />
          </SideList>
          <SideRail>
            <Up color="#e0e0e0" />
            <ScrollThumb $soft $grow={413} />
            <Grow $grow={347} />
            <Down color="#e0e0e0" />
          </SideRail>
        </SideBody>
        <Plans>
          <Disc $size={28}><S w={16} vb={16}><path d="M8 1l6 3.500v7L8 15l-6-3.500v-7z" stroke="#333" strokeWidth="1.400" /><path d="M9 4v3.500h3L7 12V9H5z" fill="#333" /></S></Disc>
          <span>View plans<small>Unlimited access, team features,...</small></span>
        </Plans>
      </Side>
      <Thread>
        <ThreadTop>
          <Model>ChatGPT 4o<ChevronDown size={16} color="#b4b4b4" /></Model>
          <Share><Upload size={15} />Share</Share>
          <Initials>JD</Initials>
        </ThreadTop>
        <Messages>
          <Bubble>4 where they save</Bubble>
          <p>When you use <code>Windows + Shift + S</code> for taking a screenshot with Snip &amp; Sketch (Snipping Tool), the<br />screenshot <b>is not automatically saved as a file</b>. Instead, it is copied to your <b>clipboard</b>.</p>
          <h3>Where to Find It:</h3>
          <ol>
            <li><b>Clipboard</b> – You can paste it into an app like:
              <ul>
                <li><b>Paint</b> (<code>Ctrl + V</code>)</li>
                <li><b>Word</b></li>
                <li><b>Email</b></li>
                <li><b>Chat apps like Discord</b>, <b>Teams, etc.</b></li>
              </ul>
            </li>
            <li><b>Snipping Tool App</b> – After taking the screenshot, a small pop-up appears in the bottom-right. Click<br />it to open Snipping Tool and <b>save</b> it manually.</li>
            <li><b>Manually Save It</b> – Once opened in Snipping Tool, click:
              <ul><li><code>File &gt; Save As</code> and choose a location like <b>Desktop, Documents, or Pictures</b>.</li></ul>
            </li>
          </ol>
          <p>If you want automatic saving, use <code>Windows + PrtScn</code>, which saves to:<br />
            <S w={20} vb={20}><path d="M1.500 3.500l5-1 2 2h7v13h-14z" fill="#e23b2e" stroke="#222" /><path d="M4 5.500h14.500l-1.500 12H2z" fill="#ffc94d" stroke="#222" /></S> <code>C:\Users\YourUsername\Pictures\Screenshots</code></p>
          <p>Need more help? <S w={19} vb={20}><circle cx="10" cy="10" r="9.300" fill="#ffc83d" stroke="#222" /><path d="M5 8.500q1.500-2 3 0M12 8.500q1.500-2 3 0M6 12q4 4.500 8 0" stroke="#222" strokeWidth="1.300" /><circle cx="4.500" cy="11" r="1.500" fill="#f08a5d" /><circle cx="15.500" cy="11" r="1.500" fill="#f08a5d" /></S></p>
          <Tools>
            <Tool aria-label="Read aloud"><Volume2 size={17} /></Tool>
            <Tool aria-label="Copy"><S><path d="M5.500 5V2.500h8v8H11M2.500 5.500h8v8h-8z" stroke="currentColor" strokeWidth="1.600" strokeLinejoin="round" /></S></Tool>
            <Tool aria-label="Good response"><ThumbsUp size={16} /></Tool>
            <Tool aria-label="Bad response"><ThumbsDown size={16} /></Tool>
            <Tool aria-label="Edit in canvas"><S><path d="M5 14l1-4 6-7a1.800 1.800 0 012.600 2.500L8.500 13zM3.500 1v4M1.500 3h4" stroke="currentColor" strokeWidth="1.500" strokeLinejoin="round" /></S></Tool>
            <Tool $w={46} aria-label="Regenerate"><RefreshCw size={15} /><ChevronDown size={13} /></Tool>
          </Tools>
        </Messages>
        <Composer>
          <Prompt aria-label="Message" placeholder="Message ChatGPT" />
          <ComposerRow>
            <Pill type="button" aria-label="Attach"><Plus size={18} /></Pill>
            <Pill type="button" $w={82}><Globe size={17} />Search</Pill>
            <Pill type="button" aria-label="More"><Dot3 size={18} /></Pill>
            <Pill type="button" $dark aria-label="Voice mode"><S w={18} vb={18}><path d="M3 7v4M7 3v12M11 5v8M15 7v4" stroke="#fff" strokeWidth="2.200" strokeLinecap="round" /></S></Pill>
          </ComposerRow>
        </Composer>
        <Note>ChatGPT can make mistakes. Check important info.</Note>
        <HelpDot aria-label="Help">?</HelpDot>
        <ThreadRail>
          <Up color="#dcdcdc" />
          <Grow $grow={550} />
          <ScrollThumb $soft $grow={187} />
          <Down color="#dcdcdc" />
        </ThreadRail>
      </Thread>
    </Chat>
  );
}

/* ---------- taskbar ---------- */

const Bar = styled.div`
  display: flex;
  height: 40px;
  color: #fff;
  background: linear-gradient(90deg, #17222f, #1c2f36 18%, #18252f 30%, #1d3237 40%, #182530 52%, #1d3135 68%, #1a2026 84%, #20252b);
`;
const Cell = styled.button`
  ${bare};
  width: ${(p) => p.$w || 49}px;
  height: 40px;
  background: ${(p) => p.$bg || "none"};
  box-shadow: inset 0 -2px ${(p) => p.$line || "transparent"};
`;
const BarSearch = styled.label`
  display: flex;
  align-items: center;
  gap: 11px;
  width: 344px;
  padding: 0 11px;
  border: 1px solid #c8c8c8;
  background: #f2f2f2;
  color: #333;
`;
const Tray = styled.div`
  display: flex;
  align-items: center;
  margin-left: auto;
  padding-right: ${(p) => p.$end}px;
`;
const Weather = styled.button`
  ${bare};
  justify-content: flex-start;
  gap: 8px;
  width: 130px;
  font-size: 14px;
`;
const Clock = styled.time`
  width: 62px;
  text-align: center;
  font-size: 11px;
  line-height: 18px;
  white-space: pre-line;
`;
const ShowDesktop = styled.span`
  height: 40px;
  width: 4px;
  margin-left: 7px;
  border-left: 1px solid #59616a;
`;

const apps = {
  copilot: <S w={24} vb={24}><path d="M9 2h6c2 0 2.500 1 3 3l1 3h-5L11 19c-.5 2-1.500 3-3 3H4c-2 0-2-2-1.500-4L6 5c.5-2 1-3 3-3z" fill="#2a8fe0" /><path d="M9 2h5l-4 12H3.500L6 5c.5-2 1-3 3-3z" fill="#3fb8a0" /><path d="M14 8h6c2 0 2 2 1.500 4L19 19c-.6 2-1.500 3-3 3H8c2 0 2.500-1 3-3z" fill="#e8559a" /><path d="M14 8h6c2 0 2 2 1.500 4l-.5 2h-8.500z" fill="#a35be0" /><path d="M12 16h8l-1 3c-.6 2-1.500 3-3 3H9c1.500-.5 2-2 3-6z" fill="#f58b45" /></S>,
  edge: <S w={24} vb={24}><path d="M1 13C1 5 7 1 13 1c7 0 10 5 10 9 0 3-2 5-5 5-2 0-4-.5-3-2 1-3-1-5-4-5-5 0-8 4-10 5z" fill="#35c1b0" /><path d="M1 12c1-3 5-5 9-5-3 2-4 9 2 13 3 2 6 2 9 0-2 3-6 4-9 4C5 24 1 18 1 12z" fill="#1677d2" /><rect x="1" y="14" width="12" height="9" rx="1" fill="#d98a1f" /><path d="M4.500 14v-2h5v2" stroke="#8a5410" strokeWidth="1.500" /><path d="M1 18h12" stroke="#8a5410" /></S>,
  files: <S w={24} vb={24}><path d="M1 3h8l2 3h12v15H1z" fill="#e5a52c" /><path d="M1 7h22v14H1z" fill="#ffd76a" /><path d="M5 14h14v8h-4v-4H9v4H5z" fill="#3c8fd6" /></S>,
  store: <S w={24} vb={24}><path d="M8 7V3h8v4" stroke="#22a7e8" strokeWidth="2" /><path d="M1 6h22v14a3 3 0 01-3 3H4a3 3 0 01-3-3z" fill="#f4f4f4" /><path d="M7 10h4.500v4.500H7z" fill="#f25022" /><path d="M12.500 10H17v4.500h-4.500z" fill="#7fba00" /><path d="M7 15.500h4.500V20H7z" fill="#00a4ef" /><path d="M12.500 15.500H17V20h-4.500z" fill="#ffb900" /></S>,
  chrome: <S w={24} vb={24}><circle cx="12" cy="12" r="12" fill="#fbc116" /><path d="M12 12L1.600 6A12 12 0 0122.400 6z" fill="#e33b2e" /><path d="M1.600 6A12 12 0 0011.500 24L17 15l-5-3z" fill="#2da94f" /><path d="M12 6.500h10.600A12 12 0 0112 24l5-9z" fill="#fbc116" /><circle cx="12" cy="12" r="6" fill="#fff" /><circle cx="12" cy="12" r="4.600" fill="#4285f4" /></S>,
  gear: <S w={24} vb={24}><path d="M10 0h4l.7 3.400 3 1.200 2.900-1.900 2.700 2.700-1.900 2.900 1.200 3V12h2v3l-3.400.7-1.200 3 1.900 2.900-2.700 2.700-2.900-1.900L14 24h-4l-.7-3-3-1.200-2.900 1.900L.7 18.900l1.900-2.900L0 14v-4l3.400-.7 1.200-3-1.900-2.900L5.400.7l2.900 1.900z" fill="#4e9a3a" /><circle cx="12" cy="12" r="5.500" fill="#16222b" /><circle cx="12" cy="12" r="3.500" fill="#4e9a3a" /></S>,
  outlook: <S w={26} vb={26}><path d="M5 6l8-5 11 6v13H5z" fill="#1d7fd0" /><path d="M9 4h10v8H9z" fill="#50b6f2" /><rect x="0" y="6" width="13" height="13" rx="1" fill="#0f5ea8" /><circle cx="6.500" cy="12.500" r="3.200" stroke="#fff" strokeWidth="1.800" /><circle cx="19" cy="18" r="7.500" fill="#6cc8f8" /><path d="M15 15h8v6h-8zl4 3.500 4-3.500" stroke="#111" strokeWidth="1.300" /></S>,
  word: <S w={24} vb={24}><path d="M7 1h17v22H7z" fill="#2b7cd3" /><path d="M7 1h17v6H7z" fill="#41a5ee" /><path d="M7 17h17v6H7z" fill="#103f91" /><rect x="0" y="6" width="12" height="12" rx="1" fill="#185abd" /><path d="M2 9l2 6 2-5 2 5 2-6" stroke="#fff" strokeWidth="1.500" /></S>,
  panel: <S w={22} vb={22}><rect y="3" width="22" height="16" rx="1" fill="#58b7ea" /><rect x="2" y="5" width="18" height="12" fill="#bfe4f8" /><circle cx="7" cy="11" r="4" fill="#2b86c9" /><path d="M7 7v4h4A4 4 0 007 7z" fill="#f0a030" /><path d="M13 7h6M13 10h6M13 14h6" stroke="#2b6ea3" strokeWidth="1.600" /></S>,
  snip: <S w={24} vb={24}><ellipse cx="12" cy="9" rx="11" ry="8" fill="#d7dbe0" transform="rotate(-20 12 9)" /><path d="M2 14L18 2l3 1-9 14z" fill="#d94b48" opacity=".75" /><path d="M6 8l12 1M8 5l8 9" stroke="#fff" /><path d="M12 13l6 8M18 12l-3 9" stroke="#2d8fd8" strokeWidth="1.600" /><circle cx="13.500" cy="20.500" r="2" stroke="#2d8fd8" strokeWidth="1.500" /><circle cx="20" cy="20.500" r="2" stroke="#2d8fd8" strokeWidth="1.500" /></S>,
  sticky: <S w={22} vb={22}><path d="M0 0h22v22H0z" fill="#fed100" /><path d="M11 11h11l-8 11h-3z" fill="#3f3f45" /><path d="M22 11v11h-8z" fill="#e8a200" /></S>,
  webex: <S w={24} vb={24}><rect width="24" height="24" rx="6" fill="#101214" /><path d="M4 8c.5 6 2 9 4 9s3-3 4-6 2-5 4-5 4 2 3.500 6" stroke="#29c4e8" strokeWidth="3" strokeLinecap="round" /><path d="M12 9c1 5 2 8 4 8s3.500-2 4-6" stroke="#3d6cf0" strokeWidth="3" strokeLinecap="round" /><path d="M5 7c2-1 4 0 5 3" stroke="#5fd35f" strokeWidth="3" strokeLinecap="round" /></S>,
  settings: <S w={20} vb={20}><circle cx="10" cy="10" r="5" stroke="#fff" strokeWidth="3" /><path d="M10 0v4M10 16v4M0 10h4M16 10h4M3 3l3 3M14 14l3 3M17 3l-3 3M6 14l-3 3" stroke="#fff" strokeWidth="3" /></S>,
  code: <S w={24} vb={24}><path d="M18 0l6 3v18l-6 3z" fill="#2aa5f2" /><path d="M18 0v7L4 18.500 0 16z" fill="#0a78c8" /><path d="M18 24v-7L4 5.500 0 8z" fill="#1389d8" /></S>,
};

function TaskIcons({ chrome, outlook }) {
  return Object.entries(apps).map(([name, icon]) => (
    <Cell
      key={name}
      aria-label={name}
      $bg={name === "chrome" ? "#4a545e" : name === "outlook" ? outlook.bg : undefined}
      $line={name === "chrome" ? chrome : name === "outlook" ? outlook.line : undefined}
    >
      {icon}
    </Cell>
  ));
}

const Start = () => (
  <Cell $w={48} aria-label="Start"><S><path d="M0 2.200l6.700-.9v6.300H0zM7.500 1.200L16 0v7.600H7.500zM0 8.400h6.700v6.300L0 13.800zM7.500 8.400H16V16l-8.500-1.200z" fill="#fff" /></S></Cell>
);
const TaskView = () => (
  <Cell $w={50} aria-label="Task view"><S><path d="M.5 0v2.500h10V0M.5 16v-2.500h10V16M.5 5.500h10v5H.5zM14.500 0v3.500M14.500 8v8M13.500 5.500h2" stroke="#fff" /></S></Cell>
);

function App() {
  return (
    <Desktop>
      <Global />
      <Screen>
        <Browser url="us-east-2.console.aws.amazon.com/ec2/home?region=us-east-2#LaunchInstances:" tabs={[{ title: "Launch an instance | EC2 | us-ea", icon: "ec2", current: true, fade: true }]}>
          <Aws />
        </Browser>
        <Bar>
          <Start />
          <BarSearch>
            <Search size={17} strokeWidth={1.500} transform="scale(-1 1)" />
            <PlainInput aria-label="Type here to search" placeholder="Type here to search" $plain $hint="#444" />
          </BarSearch>
          <TaskView />
          <TaskIcons chrome="#76b9ed" outlook={{ bg: "#a5622e", line: "#f7630c" }} />
          <Tray $end={0}>
            <Weather>
              <S w={24} vb={24}><path d="M5 22a5 5 0 01-1-9.500A7 7 0 0117 11a5.600 5.600 0 012 11z" fill="#cfdcf5" /><circle cx="18" cy="7" r="6" fill="#c42b1c" /><text x="18" y="10" fontSize="9" fill="#fff" textAnchor="middle">1</text></S>
              <span>64°F&nbsp; Cloudy</span>
            </Weather>
            <Cell $w={24} aria-label="Hidden icons"><ChevronUp size={15} /></Cell>
            <Cell $w={24} aria-label="Meet now"><S><path d="M3.500 4.500h7v7h-7zM10.500 7l3-1.500v5l-3-1.500M5 1.500q3-1.500 6 0M5 14.500q3 1.500 6 0" stroke="#fff" /></S></Cell>
            <Cell $w={24} aria-label="OneDrive"><S><path d="M3 12a3 3 0 010-6 5 5 0 019-1 4 4 0 013 7z" fill="#1b7fd6" /><circle cx="11.500" cy="11.500" r="4.500" fill="#fff" /><path d="M9.500 11a2 2 0 014 0M13.500 12.500a2 2 0 01-4 0" stroke="#1b5fa6" /></S></Cell>
            <Cell $w={24} aria-label="Network"><Monitor size={16} strokeWidth={1.500} /></Cell>
            <Cell $w={24} aria-label="Volume"><Volume2 size={16} strokeWidth={1.500} /></Cell>
            <Clock>{"9:40 AM\n2/11/2025"}</Clock>
            <Cell $w={44} aria-label="Notifications"><MessageSquare size={17} strokeWidth={1.500} /></Cell>
            <ShowDesktop />
          </Tray>
        </Bar>
      </Screen>
      <Screen>
        <Browser
          active
          url="chatgpt.com/c/67ab6e86-fc94-8009-a144-b117f24e78c7"
          tabs={[
            { title: "AWS-Projects/AWS-Project1-En", icon: "git", fade: true, divided: true },
            { title: "GitHub Folder Structure", icon: "gpt" },
            { title: "SS Command on Windows", icon: "gpt", current: true },
          ]}
        >
          <ChatGpt />
        </Browser>
        <Bar>
          <Start />
          <Cell $w={48} aria-label="Search"><Search size={22} strokeWidth={1.800} transform="scale(-1 1)" /></Cell>
          <TaskView />
          <TaskIcons chrome="#76b9ed" outlook={{ line: "#76b9ed" }} />
          <Tray $end={2}>
            <Clock>{"9:40 AM\n2/11/2025"}</Clock>
          </Tray>
        </Bar>
      </Screen>
    </Desktop>
  );
}

export default App;
